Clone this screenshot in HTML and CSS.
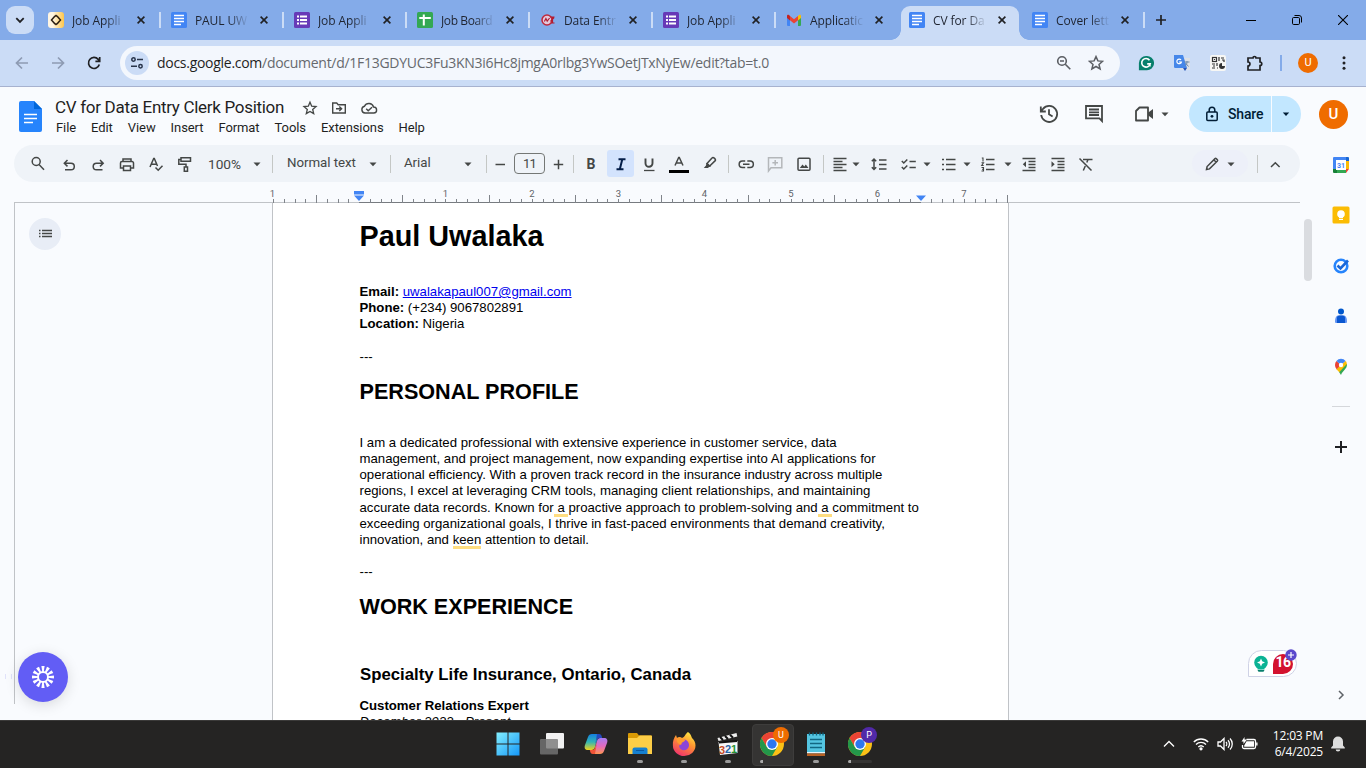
FILE: index.html
```html
<!DOCTYPE html>
<html lang="en">
<head>
<meta charset="utf-8">
<title>CV for Data Entry Clerk Position</title>
<link rel="stylesheet" href="styles.css">
</head>
<body>
<svg class="sprite" width="0" height="0">
  <symbol id="x" viewBox="0 0 10 10"><path d="M1.6 1.600l6.800 6.800M8.400 1.600L1.600 8.400" stroke="#202124" stroke-width="1.600"/></symbol>
  <symbol id="docs" viewBox="0 0 16 16"><rect width="16" height="16" rx="1.500" fill="#4285f4"/><path d="M3 3.500h10M3 6.500h10M3 9.500h10M3 12.500h7" stroke="#fff" stroke-width="1.500"/></symbol>
  <symbol id="forms" viewBox="0 0 16 16"><rect width="16" height="16" rx="1.500" fill="#673ab7"/><path d="M6 4.500h7M6 8h7M6 11.500h7M3 4.500h2M3 8h2M3 11.500h2" stroke="#fff" stroke-width="1.800"/></symbol>
  <symbol id="arr" viewBox="0 0 10 10"><path d="M1.500 3.500h7L5 7.200z" fill="#444746"/></symbol>
  <symbol id="chrome" viewBox="0 0 24 24"><circle cx="12" cy="12" r="12" fill="#fbc116"/><path d="M12 6h10.400A12 12 0 0 0 1.600 6l5.200 9z" fill="#ea4335"/><path d="M1.600 6A12 12 0 0 0 12 24l5.200-9H6.800z" fill="#23974a"/><circle cx="12" cy="12" r="6" fill="#fff"/><circle cx="12" cy="12" r="4.700" fill="#2d77ee"/></symbol>
</svg>

<header class="tabstrip">
  <div class="tabsearch"><svg width="10" height="10" viewBox="0 0 10 10"><path d="M1.300 3.200L5 6.900l3.700-3.700" fill="none" stroke="#202124" stroke-width="1.800"/></svg></div>
  <div class="tab"><svg class="fav" viewBox="0 0 16 16"><defs><linearGradient id="jg"><stop offset=".3" stop-color="#fff5e2"/><stop offset="1" stop-color="#ffc64a"/></linearGradient></defs><rect width="16" height="16" rx="3" fill="url(#jg)"/><path d="M7 4L3.500 8 7 12M9 4l3.500 4L9 12M6.500 4.800L8 3.500l1.500 1.300M6.500 11.200L8 12.500l1.500-1.300" fill="none" stroke="#2b1d10" stroke-width="1.500"/></svg><span class="tt">Job Appli</span><svg class="cl"><use href="#x"/></svg><i></i></div>
  <div class="tab"><svg class="fav"><use href="#docs"/></svg><span class="tt">PAUL UW</span><svg class="cl"><use href="#x"/></svg><i></i></div>
  <div class="tab"><svg class="fav"><use href="#forms"/></svg><span class="tt">Job Appli</span><svg class="cl"><use href="#x"/></svg><i></i></div>
  <div class="tab"><svg class="fav" viewBox="0 0 16 16"><rect width="16" height="16" rx="1.500" fill="#34a853"/><path d="M6.800 2.500v11M2.300 6h11.500" stroke="#fff" stroke-width="2"/></svg><span class="tt tight">Job Board</span><svg class="cl"><use href="#x"/></svg><i></i></div>
  <div class="tab"><svg class="fav" viewBox="0 0 16 16"><circle cx="7" cy="8" r="5" fill="#e4c9dc" stroke="#c0283c" stroke-width="1.500"/><path d="M4.400 9.500l1.500-3 1.300 2.600L9.600 6M10.500 9.500l3.500-4M10 5h4.500M11 11h3.500M12.500 5.500v5" fill="none" stroke="#b01c32" stroke-width="1.200"/></svg><span class="tt">Data Entr</span><svg class="cl"><use href="#x"/></svg><i></i></div>
  <div class="tab"><svg class="fav"><use href="#forms"/></svg><span class="tt">Job Appli</span><svg class="cl"><use href="#x"/></svg><i></i></div>
  <div class="tab"><svg class="fav" viewBox="0 0 16 16"><path d="M1 4.500h3V14H2a1 1 0 0 1-1-1z" fill="#4285f4"/><path d="M12 4.500h3V13a1 1 0 0 1-1 1h-2z" fill="#34a853"/><path d="M12 4l1-.9c1-.7 2 0 2 1V6l-3 2.500z" fill="#fbbc04"/><path d="M4 4L3 3.100C2 2.400 1 3.100 1 4v2l3 2.500z" fill="#c5221f"/><path d="M4 4l4 3.200L12 4v4.300l-4 3.200-4-3.200z" fill="#ea4335"/></svg><span class="tt">Applicatic</span><svg class="cl"><use href="#x"/></svg></div>
  <div class="tab active"><svg class="fav"><use href="#docs"/></svg><span class="tt">CV for Da</span><svg class="cl"><use href="#x"/></svg></div>
  <div class="tab"><svg class="fav"><use href="#docs"/></svg><span class="tt">Cover lett</span><svg class="cl"><use href="#x"/></svg><i></i></div>
  <svg class="newtab" width="12" height="12" viewBox="0 0 12 12"><path d="M6 1v10M1 6h10" stroke="#202124" stroke-width="1.700"/></svg>
  <div class="wincontrols">
    <svg width="10" height="10" viewBox="0 0 10 10"><path d="M0 5.500h10" stroke="#000"/></svg>
    <svg width="10" height="10" viewBox="0 0 10 10" fill="none" stroke="#000"><rect x=".500" y="2.500" width="7" height="7" rx="1.200"/><path d="M2.500.500H7A2.500 2.500 0 0 1 9.500 3v4.500"/></svg>
    <svg width="10" height="10" viewBox="0 0 10 10"><path d="M0 0l10 10M10 0L0 10" stroke="#000" stroke-width="1.100"/></svg>
  </div>
</header>

<nav class="browserbar">
  <div class="navbtns">
    <svg class="dim" width="14" height="14" viewBox="0 0 14 14"><path d="M13 7H2M7 1.500L1.500 7 7 12.500"/></svg>
    <svg class="dim" width="14" height="14" viewBox="0 0 14 14"><path d="M1 7h11M7 1.500L12.500 7 7 12.500"/></svg>
    <svg width="14" height="14" viewBox="0 0 14 14"><path d="M12.300 8.500A5.500 5.500 0 1 1 11.200 3.400L12.600 5M12.700 1v4.300H8.400"/></svg>
  </div>
  <div class="omnibox">
    <span class="siteinfo"><svg width="14" height="14" viewBox="0 0 14 14" fill="none" stroke="#28344a" stroke-width="1.500"><circle cx="3.500" cy="3.500" r="1.700"/><path d="M7 3.500h6M1 10.300h6"/><circle cx="10.500" cy="10.300" r="1.700"/></svg></span>
    <span class="url"><b>docs.google.com</b>/document/d/1F13GDYUC3Fu3KN3i6Hc8jmgA0rlbg3YwSOetJTxNyEw/edit?tab=t.0</span>
    <svg class="zoomout" width="16" height="16" viewBox="0 0 16 16" fill="none" stroke="#5b5e63" stroke-width="1.600"><circle cx="6" cy="6" r="4.300"/><path d="M9.300 9.300l5 5M4 6h4"/></svg>
    <svg width="16" height="16" viewBox="0 0 16 16"><path d="M8 1.600l1.900 4.300 4.700.4-3.600 3.100 1.100 4.600L8 11.500 3.900 14 5 9.400 1.400 6.300l4.700-.4z" fill="none" stroke="#5b5e63" stroke-width="1.500"/></svg>
  </div>
  <div class="exts">
    <svg width="16" height="16" viewBox="0 0 16 16"><path d="M8 1a7.200 7.200 0 1 1 0 14.300H.900V8A7.100 7.100 0 0 1 8 1z" fill="#087f6c"/><path d="M11.500 5.200A4.300 4.300 0 1 0 12.200 8.900H9.200M11.900 8.500v3" fill="none" stroke="#fff" stroke-width="1.600"/></svg>
    <svg width="16" height="16" viewBox="0 0 16 16"><rect x="6" y="3" width="10" height="12" fill="#dce0e7"/><path d="M0 0h9l4 13H1.200A1.200 1.200 0 0 1 0 12z" fill="#4687e9"/><path d="M9 13h4l-2 3z" fill="#2554b8"/><path d="M7 5a2.300 2.300 0 1 0 .4 2H5" fill="none" stroke="#fff" stroke-width="1.200"/><path d="M10.500 7h5M13 6v1c0 2-1 3-2 4M11.500 8l3 3.500" fill="none" stroke="#6f8aa8"/></svg>
    <svg width="16" height="16" viewBox="0 0 16 16"><rect width="16" height="16" rx="2" fill="#f7f7f4"/><g fill="none" stroke="#333" stroke-width="1.200"><rect x="2.500" y="2.500" width="4" height="4"/><path d="M9 2v4M11 3h3M12 5h2v2M2 9h3M7 8v3M3 11h2M2 13h3M7 13h1M4.500 4v1"/></g><path d="M9 11a3 3 0 0 1 3-3v3h3a3 3 0 0 1-6 0z" fill="#333"/></svg>
    <svg width="18" height="18" viewBox="0 0 18 18"><path d="M2 4h5a1.500 1.500 0 0 1 3 0h4v4a1.500 1.500 0 0 1 0 3.500v4.500H2v-4c2.600 0 2.600-4 0-4z" fill="none" stroke="#202124" stroke-width="1.700"/></svg>
  </div>
  <i class="extsep"></i>
  <span class="avatar small">U</span>
  <svg class="kebab" width="4" height="16" viewBox="0 0 4 16" fill="#202124"><circle cx="2" cy="2.700" r="1.500"/><circle cx="2" cy="8" r="1.500"/><circle cx="2" cy="13.300" r="1.500"/></svg>
</nav>

<main class="app">
  <section class="apphead">
    <svg class="logo" width="24" height="32" viewBox="0 0 24 32"><path d="M2 1h13L23 9V30a2 2 0 0 1-2 2H2a2 2 0 0 1-2-2V3a2 2 0 0 1 2-2z" fill="#2684fc"/><path d="M15 1l8 8h-8z" fill="#0066da"/><path d="M5 14.500h13M5 18.500h13M5 22.500h9" stroke="#fff" stroke-width="1.600"/></svg>
    <div class="titles">
      <div class="titlerow"><span class="doctitle">CV for Data Entry Clerk Position</span>
        <svg width="16" height="16" viewBox="0 0 16 16"><path d="M8 2.200l1.700 4 4.300.4-3.300 2.800 1 4.200L8 11.400l-3.700 2.200 1-4.200L2 6.600l4.300-.4z" fill="none" stroke="#444746" stroke-width="1.300"/></svg>
        <svg width="16" height="16" viewBox="0 0 16 16"><path d="M1.700 3h4l1.500 1.700h7.100V13H1.700zM5 8.800h5.500M8.300 6.500l2.300 2.300L8.300 11" fill="none" stroke="#444746" stroke-width="1.400"/></svg>
        <svg width="18" height="16" viewBox="0 0 18 16"><path d="M5 13a3.400 3.400 0 0 1-.5-6.700A4.800 4.800 0 0 1 13.500 7a3 3 0 0 1 .2 6zM6.200 8.800l2 2L12 7.200" fill="none" stroke="#444746" stroke-width="1.400"/></svg>
      </div>
      <div class="menus"><span>File</span><span>Edit</span><span>View</span><span>Insert</span><span>Format</span><span>Tools</span><span>Extensions</span><span>Help</span></div>
    </div>
    <div class="actions">
      <svg class="hist" width="20" height="20" viewBox="0 0 20 20" fill="none" stroke="#444746" stroke-width="1.800"><path d="M2.200 11A8 8 0 1 0 4 4.800L1.800 7.200M1.800 2.500v5h5M10 5.300v5l3.600 2.200"/></svg>
      <svg class="cmt" width="20" height="20" viewBox="0 0 20 20" fill="none" stroke="#444746" stroke-width="1.800"><path d="M2 2h16v15l-2.600-2.600H2zM5 5.500h10M5 8.300h10M5 11h10"/></svg>
      <svg class="meet" width="20" height="20" viewBox="0 0 20 20"><path d="M5.500 3.500h8.500v13H2V7z" fill="none" stroke="#444746" stroke-width="1.800" stroke-linejoin="round"/><path d="M14 8.800l5-3.800v10l-5-3.800z" fill="#444746"/></svg>
      <svg class="a10"><use href="#arr"/></svg>
      <div class="share"><svg width="14" height="16" viewBox="0 0 14 16"><rect x="1.800" y="6" width="10.400" height="8.500" rx="1" fill="none" stroke="#001d35" stroke-width="1.500"/><path d="M4.200 6V4a2.800 2.800 0 0 1 5.600 0v2" fill="none" stroke="#001d35" stroke-width="1.500"/><circle cx="7" cy="10.300" r="1.400" fill="#001d35"/></svg><span>Share</span></div>
      <div class="sharemore"><svg width="10" height="10" viewBox="0 0 10 10"><path d="M1.800 3.500h6.400L5 7z" fill="#001d35"/></svg></div>
      <span class="avatar">U</span>
    </div>
  </section>

  <div class="work">
    <div class="maincol">
      <div class="toolbar">
        <svg class="ic" viewBox="0 0 18 18"><circle cx="7.200" cy="6.500" r="4"/><path d="M10 9.500l5 5.200"/></svg>
        <svg class="ic" viewBox="0 0 18 18"><path d="M5 14.800h6a3.300 3.300 0 0 0 0-6.600H4.500M7.500 5L4.300 8.200l3.200 3.200"/></svg>
        <svg class="ic" viewBox="0 0 18 18"><path d="M13.500 14.800h-6a3.300 3.300 0 0 1 0-6.600H14M11 5l3.200 3.200L11 11.400"/></svg>
        <svg class="ic" viewBox="0 0 18 18"><path d="M5 6.500V4h8v2.500M5 13H2.500V8A1.500 1.500 0 0 1 4 6.500h10A1.500 1.500 0 0 1 15.500 8v5H13M5.500 11h7v4.500h-7z"/></svg>
        <svg class="ic" viewBox="0 0 18 18"><path d="M3 12L6.700 3.500h.6L10.500 11M4.300 9.200h5.300M8.500 12.500l2.700 2.700 4.300-4.400"/></svg>
        <svg class="ic" viewBox="0 0 18 18"><path d="M5 2.800h9.500v3.500H5zM5 4.500H2.800v4.700H10v2.600M8.300 12h3.200v4.300H8.300z"/></svg>
        <span class="tx pct">100%</span><svg class="a10"><use href="#arr"/></svg><i class="sep"></i>
        <span class="tx up">Normal text</span><svg class="a10"><use href="#arr"/></svg><i class="sep"></i>
        <span class="tx up">Arial</span><svg class="a10"><use href="#arr"/></svg><i class="sep"></i>
        <svg class="ic" viewBox="0 0 18 18"><path d="M4.500 9.500h9.500"/></svg>
        <span class="size">11</span>
        <svg class="ic" viewBox="0 0 18 18"><path d="M4.800 9.500h9.400M9.500 4.800v9.400"/></svg><i class="sep"></i>
        <span class="let bold">B</span><span class="let ital"><svg class="ic" viewBox="0 0 18 18"><path d="M6.500 4.300h7M4.500 14.200h7M10.300 4.300L7.800 14.200"/></svg></span>
        <svg class="ic" viewBox="0 0 18 18"><path d="M5.500 3.500V8.300a3.500 3.500 0 0 0 7 0V3.500" stroke-width="1.900"/><path d="M4 15.500h10.500" stroke-width="1.300"/></svg>
        <svg class="colr" width="20" height="18" viewBox="0 0 20 18"><path d="M6 10.500L9.700 2.500h.6L14 10.500M7.300 8h5.400" fill="none" stroke="#444746" stroke-width="1.500"/><path d="M0 15h20v3H0z"/></svg>
        <svg class="ic" viewBox="0 0 18 18"><path d="M6 8.500l5-5.600a1.300 1.300 0 0 1 2 0l1 1a1.300 1.300 0 0 1 0 2L8.700 11z"/><path d="M5.500 7.800L5 10.500 2.800 13H7l1-1 2-.5z" fill="#444746" stroke="none"/></svg><i class="sep"></i>
        <svg class="ic" viewBox="0 0 18 18"><path d="M8.200 6H5.400a3.200 3.200 0 0 0 0 6.500h2.800M10.300 6h2.800a3.200 3.200 0 0 1 0 6.500h-2.800M6 9.200h6.500"/></svg>
        <svg class="ic off" viewBox="0 0 18 18"><path d="M2.500 16V2.800h13.300v10H5zM9.200 5v5.600M6.400 7.800H12"/></svg>
        <svg class="ic" viewBox="0 0 18 18"><rect x="3" y="3.200" width="12" height="12" rx="1"/><path d="M4.800 13l2.700-3.500 1.800 2 1.500-2 2.700 3.500z" fill="#444746" stroke="none"/></svg><i class="sep"></i>
        <svg class="ic" viewBox="0 0 18 18"><path d="M2.500 3.500H15.500M2.500 6.500H11.500M2.500 9.500H15.500M2.500 12.500H11.500M2.500 15.500H15.500" stroke-width="1.300"/></svg><svg class="a10"><use href="#arr"/></svg>
        <svg class="ic" viewBox="0 0 18 18"><path d="M9 5h7.500M9 9.500h7.500M9 14h7.500M4 4.500v9.500M1.800 6.300L4 4.100l2.200 2.200M1.800 12.200L4 14.400l2.200-2.200"/></svg>
        <svg class="ic" viewBox="0 0 18 18"><path d="M1.800 6l2 2 3.500-3.500M1.800 12l2 2 3.500-3.500M9.500 6.500h6.300M9.500 12.500h6.300"/></svg><svg class="a10"><use href="#arr"/></svg>
        <svg class="ic" viewBox="0 0 18 18"><path d="M6 4.500h9.500M6 9.500h9.500M6 14.500h9.500M2 4.500h2M2 9.500h2M2 14.500h2"/></svg><svg class="a10"><use href="#arr"/></svg>
        <svg class="ic" viewBox="0 0 18 18"><path d="M7 4.500h8.500M7 9.500h8.500M7 14.500h8.500"/><path d="M2.800 3h1.200v3.500M2.500 7.800h2L2.700 10.500h2M2.500 12.500h2v3.500h-2M3 14.200h1.400" stroke-width="1.100"/></svg><svg class="a10"><use href="#arr"/></svg>
        <svg class="ic" viewBox="0 0 18 18"><path d="M2.500 3.500h13M8.500 6.500h7M8.500 9.500h7M8.500 12.500h7M2.500 15.500h13" stroke-width="1.300"/><path d="M6 6.300v6L2.800 9.300z" fill="#444746" stroke="none"/></svg>
        <svg class="ic" viewBox="0 0 18 18"><path d="M2.500 3.500h13M8.500 6.500h7M8.500 9.500h7M8.500 12.500h7M2.500 15.500h13" stroke-width="1.300"/><path d="M2.500 6.300v6l3.200-3z" fill="#444746" stroke="none"/></svg>
        <svg class="ic" viewBox="0 0 18 18"><path d="M6 4.500h9.500M10.800 5L9.800 7.500M8.300 11l-2 4.500M2.500 3.500L14.500 15.500"/></svg>
        <span class="mode"><svg class="ic" viewBox="0 0 18 18"><path d="M3.500 14.500l.6-3L12 3.600a.9.900 0 0 1 1.200 0L14.400 4.800a.9.900 0 0 1 0 1.200L6.500 13.900zM11 5l2 2"/></svg><svg class="a10"><use href="#arr"/></svg></span><i class="sep"></i>
        <svg class="ic" viewBox="0 0 18 18"><path d="M5 12L9.300 7.700l4.300 4.300"/></svg>
      </div>
      <svg class="ruler" width="1286" height="18" viewBox="14 185 1286 18" id="ruler">
        <path d="M14 202.500H1300" stroke="#c0c3c7"/><path d="M359 202.500H921" stroke="#777b80"/>
        <path class="ticks" d="M273.500 199v4M284.500 199v4M295.500 199v4M305.500 199v4M316.500 195v8M327.500 199v4M338.500 199v4M348.500 199v4M370.500 199v4M381.500 199v4M391.500 199v4M402.500 195v8M413.500 199v4M424.500 199v4M435.500 199v4M445.500 199v4M456.500 199v4M467.500 199v4M478.500 199v4M489.500 195v8M499.500 199v4M510.500 199v4M521.500 199v4M532.500 199v4M543.500 199v4M553.500 199v4M564.500 199v4M575.500 195v8M586.500 199v4M597.500 199v4M607.500 199v4M618.500 199v4M629.500 199v4M640.500 199v4M651.500 199v4M661.500 195v8M672.500 199v4M683.500 199v4M694.500 199v4M705.500 199v4M715.500 199v4M726.500 199v4M737.500 199v4M748.500 195v8M759.500 199v4M769.500 199v4M780.500 199v4M791.500 199v4M802.500 199v4M813.500 199v4M823.500 199v4M834.500 195v8M845.500 199v4M856.500 199v4M867.500 199v4M877.500 199v4M888.500 199v4M899.500 199v4M910.500 199v4M931.500 199v4M942.500 199v4M953.500 199v4M964.500 199v4M975.500 199v4M985.500 199v4M996.500 199v4M1007.500 195v8"/>
        <g class="nums"><text x="272.500" y="197">1</text><text x="445.500" y="197">1</text><text x="532" y="197">2</text><text x="618.500" y="197">3</text><text x="704.500" y="197">4</text><text x="791" y="197">5</text><text x="877.500" y="197">6</text><text x="964" y="197">7</text></g>
        <path d="M354 191h10v3.500h-10zM354 195.500h10l-5 5.500zM916 195.500h10l-5 5.500z" fill="#4285f4"/>
      </svg>
      <div class="canvas">
        <div class="gutter"><span class="outline"><svg width="14" height="14" viewBox="0 0 14 14"><path d="M4 3.500h10M4 6.500h10M4 9.500h10M1 3.500h1.500M1 6.500h1.500M1 9.500h1.500" stroke="#444746" stroke-width="1.300"/></svg></span></div>
        <article class="page">
          <h1>Paul Uwalaka</h1>
          <p class="contact"><b>Email:</b> <a>uwalakapaul007@gmail.com</a><br><b>Phone:</b> (+234) 9067802891<br><b>Location:</b> Nigeria<br><br>---</p>
          <h2>PERSONAL PROFILE</h2>
          <p class="profile">I am a dedicated professional with extensive experience in customer service, data<br>management, and project management, now expanding expertise into AI applications for<br>operational efficiency. With a proven track record in the insurance industry across multiple<br>regions, I excel at leveraging CRM tools, managing client relationships, and maintaining<br>accurate data records. Known for<mark> a </mark>proactive approach to problem-solving and<mark> a </mark>commitment to<br>exceeding organizational goals, I thrive in fast-paced environments that demand creativity,<br>innovation, and <mark>keen</mark> attention to detail.<br><br>---</p>
          <h2 class="work-h">WORK EXPERIENCE</h2>
          <h3>Specialty Life Insurance, Ontario, Canada</h3>
          <p class="job"><b>Customer Relations Expert</b><br><em>December 2022 - Present</em></p>
        </article>
      </div>
    </div>
    <div class="scroll"><i></i></div>
    <aside class="side">
      <svg width="18" height="18" viewBox="0 0 18 18"><path d="M1 2a1 1 0 0 1 1-1h12v4H5v8H1z" fill="#4285f4"/><path d="M14 1h2a1 1 0 0 1 1 1v3h-3z" fill="#1967d2"/><path d="M14 5h3v8h-3z" fill="#fbbc04"/><path d="M5 13h9v4H5z" fill="#34a853"/><path d="M1 13h4v4H2a1 1 0 0 1-1-1z" fill="#188038"/><path d="M14 13h3l-3 4z" fill="#ea4335"/><path d="M4 4h10v10H4z" fill="#fff"/><text x="9" y="12" class="cal">31</text></svg>
      <svg width="18" height="18" viewBox="0 0 18 18"><rect x=".500" y=".500" width="17" height="17" rx="1.500" fill="#fbbc04"/><circle cx="9" cy="8" r="3.800" fill="#fff"/><path d="M7 10h4v2H7zM7 12.800h4V14H7z" fill="#fff"/></svg>
      <svg width="18" height="18" viewBox="0 0 18 18"><circle cx="9" cy="9" r="6.300" fill="none" stroke="#2684fc" stroke-width="2.600"/><path d="M5.500 8.500l3 3L16 3.500" fill="none" stroke="#1a67d8" stroke-width="2.600"/></svg>
      <svg width="18" height="18" viewBox="0 0 18 18"><circle cx="9" cy="4.500" r="3" fill="#0057cc"/><path d="M3 15c0-4 1-6.500 3.500-6.500h5c2.500 0 3.500 2.500 3.500 6.500a1 1 0 0 1-1 1H4a1 1 0 0 1-1-1z" fill="#6294f2"/><path d="M5 16v-5A2.500 2.500 0 0 1 7.500 8.500h3a2.500 2.500 0 0 1 2.500 2.500v5z" fill="#0b57d0"/></svg>
      <svg width="18" height="18" viewBox="0 0 18 18"><path d="M3 7a6 6 0 0 1 1.500-4L9 7l-4 4.700C3.800 10.200 3 9 3 7z" fill="#ea4335"/><path d="M4.400 3A6 6 0 0 1 13.600 3L9 7z" fill="#4285f4"/><path d="M4.500 11.300L13.700 3c.8 1 1.300 2.500 1.300 4L7.500 14.500z" fill="#fbbc04"/><path d="M7.200 14.200L14.800 6c.8 5-4 6-5.800 11z" fill="#34a853"/><circle cx="9" cy="7" r="2.200" fill="#fff"/></svg>
      <i></i>
      <svg class="plus" width="12" height="12" viewBox="0 0 12 12"><path d="M6 0v12M0 6h12" stroke="#202124" stroke-width="2"/></svg>
      <svg class="hide" width="8" height="10" viewBox="0 0 8 10"><path d="M2 1l4 4-4 4" fill="none" stroke="#5f6368" stroke-width="1.500"/></svg>
    </aside>
  </div>

  <div class="grip"></div>
  <div class="fab"><svg width="24" height="24" viewBox="0 0 24 24" fill="none" stroke="#fff"><circle cx="12" cy="12" r="8" stroke-width="6" pathLength="12" stroke-dasharray=".58 .42" stroke-dashoffset=".29"/><circle cx="12" cy="12" r="5" stroke-width="2"/></svg></div>
  <div class="grammar"><svg width="16" height="18" viewBox="0 0 16 18"><circle cx="8" cy="7.500" r="6.800" fill="#0bb294"/><path d="M4.500 12h7v2.500h-7z" fill="#0bb294"/><path d="M8 3.500l1.200 2.800L12 7.500 9.200 8.700 8 11.500 6.800 8.700 4 7.500l2.800-1.200z" fill="#fff"/><path d="M4.500 15h7l-1 1.800h-5z" fill="#087f6c"/></svg><span>16</span><svg class="badge" width="12" height="12" viewBox="0 0 12 12"><circle cx="6" cy="6" r="5.700" fill="#5a48cc"/><path d="M6 3v6M3 6h6" stroke="#fff" stroke-width="1.200"/></svg></div>
</main>

<footer class="taskbar">
  <div class="apps">
    <div><svg width="24" height="24" viewBox="0 0 24 24"><defs><linearGradient id="wg" x2="1" y2="1"><stop stop-color="#83efff"/><stop offset="1" stop-color="#1597f8"/></linearGradient></defs><path d="M.500.500h11v11H.500zM12.500.500h11v11h-11zM.500 12.500h11v11H.500zM12.500 12.500h11v11h-11z" fill="url(#wg)"/></svg></div>
    <div><svg width="24" height="24" viewBox="0 0 24 24"><rect x="6" y="1" width="18" height="15.500" rx="1" fill="#f1f1f1"/><rect y="7" width="18" height="15.500" rx="1" fill="#777" fill-opacity=".8"/></svg></div>
    <div><svg width="24" height="24" viewBox="0 0 24 24"><defs><linearGradient id="c1" x2="0" y2="1"><stop stop-color="#147fe0"/><stop offset=".5" stop-color="#31b5b5"/><stop offset="1" stop-color="#f1d219"/></linearGradient><linearGradient id="c2" x2="0" y2="1"><stop stop-color="#a67cf1"/><stop offset=".5" stop-color="#e26ac0"/><stop offset="1" stop-color="#ff9551"/></linearGradient></defs><path d="M8 2h7l-4 13c-.6 2-1.500 3-3.500 3H4c-3 0-4-2-3-5l3-8c.6-2 2-3 4-3z" fill="url(#c1)"/><path d="M16 22H9l4-13c.6-2 1.500-3 3.500-3H20c3 0 4 2 3 5l-3 8c-.6 2-2 3-4 3z" fill="url(#c2)"/><path d="M13 2h2c2 0 2.500 1 3.200 4h-2.700c-2 0-2.500 1-3 2.500L11 14z" fill="#2449bf"/><path d="M11 22H9c-2 0-2.500-1-3.200-4H8c2 0 3-1 3.500-3L13 10z" fill="#f15437"/></svg></div>
    <div><svg width="24" height="24" viewBox="0 0 24 24"><path d="M0 2a1 1 0 0 1 1-1h8l2 2.500h12a1 1 0 0 1 1 1V22H0z" fill="#d99a05"/><path d="M0 6h9l2.500-2.500H23a1 1 0 0 1 1 1V22H0z" fill="#fdce47"/><path d="M4.500 22v-4.500a2 2 0 0 1 2-2h11a2 2 0 0 1 2 2V22z" fill="#1680cf"/><path d="M8 18.500h8" stroke="#0a58a0"/></svg><u></u></div>
    <div><svg width="24" height="24" viewBox="0 0 24 24"><defs><linearGradient id="ff" x1=".8" x2=".3" y2="1"><stop stop-color="#fff044"/><stop offset=".45" stop-color="#ff9330"/><stop offset="1" stop-color="#f0326e"/></linearGradient></defs><path d="M16 0c3 2 3 4 4 6 2 1.500 3.500 4.500 3.500 7.500a11.300 10.500 0 0 1-22.600 0C.500 9 2 6 4 3l1 3c2-1.500 4-1 5 0 3-1 3-4 6-6z" fill="url(#ff)"/><path d="M8 9c3-3 9-1 9 4a5 5 0 0 1-10 .500l3-1.500z" fill="#8b45d8"/><path d="M5 6c3-1 4 1 6 1s3 1 1 2.500-3 1-3 3c-3-.5-5-3-4-6.500z" fill="#ff9c2f"/></svg><u></u></div>
    <div><svg width="24" height="24" viewBox="0 0 24 24"><path d="M2.500 10l19-1v12L4 23z" fill="#f7f7f7"/><path d="M1.500 6L20.500 1l.8 3.500L2.500 9z" fill="#eee"/><path d="M4 5l3 3M9 4l3 3M14 2.700l3 3M3 10.500l18-1.500" stroke="#111" stroke-width="2"/><g class="mpc"><text x="3" y="21.500" fill="#c64b24">3</text><text x="9" y="21" fill="#2767a8">2</text><text x="15" y="20.500" fill="#299332">1</text></g></svg><u></u></div>
    <div class="on"><svg width="24" height="24"><use href="#chrome"/></svg><b class="who">U</b><u class="bar"></u></div>
    <div><svg width="24" height="24" viewBox="0 0 24 24"><path d="M3 2h18v18H3z" fill="#54c5e1"/><path d="M3 20h18v1.500H3z" fill="#e9f6fa"/><path d="M3 21.500h18V24H3z" fill="#b86225"/><path d="M6 7.500h12M6 11.500h12M6 15.500h12" stroke="#126782" stroke-width="1.500"/><path d="M5.500.500v3M9 .500v3M12.500.500v3M16 .500v3M19 .500v3" stroke="#0b6580" stroke-width="1.300"/></svg><u></u></div>
    <div><svg width="24" height="24"><use href="#chrome"/></svg><b class="who p">P</b><u class="bar"></u></div>
  </div>
  <div class="tray">
    <svg width="12" height="8" viewBox="0 0 12 8"><path d="M1 6.500l5-5 5 5"/></svg>
    <svg class="wifi" width="16" height="14" viewBox="0 0 16 14"><path d="M.800 5a10.200 10.200 0 0 1 14.400 0M3 7.500a7 7 0 0 1 10 0M5.300 10a3.900 3.900 0 0 1 5.400 0"/><circle cx="8" cy="11.800" r="1" fill="#fff"/></svg>
    <svg class="vol" width="16" height="14" viewBox="0 0 16 14"><path d="M1 5h2.500L7 1.500v11L3.500 9H1zM9 5c1 1 1 3 0 4M11 3.300c2 2 2 5.400 0 7.400M13 1.500c3 3 3 8 0 11"/></svg>
    <svg class="bat" width="17" height="14" viewBox="0 0 17 14"><path d="M5.500 2.500H13A1.500 1.500 0 0 1 14.500 4v6a1.500 1.500 0 0 1-1.500 1.500H3A1.500 1.500 0 0 1 1.500 10V8M15.900 5.500v3"/><path d="M5.500 4.300H13v5.500H3.200V8.500zM3.500 0v2.500H6L2.500 7V4.500H.500z" fill="#fff" stroke="none"/></svg>
    <div class="clock"><span>12:03 PM</span><span>6/4/2025</span></div>
    <svg class="bell" width="14" height="16" viewBox="0 0 14 16"><path d="M7 .500a5 5 0 0 1 5 5V9.500l1.800 2v1H.200v-1L2 9.500V5.500a5 5 0 0 1 5-5zM4.700 13.500h4.600a2.300 1.900 0 0 1-4.600 0z" fill="#ddd" stroke="none"/></svg>
  </div>
</footer>
</body>
</html>
```
FILE: styles.css
```css
* { box-sizing: border-box; }
body { margin: 0; width: 1366px; height: 768px; overflow: hidden; display: flex; flex-direction: column; background: #f9fbfe; font-family: Roboto, "Liberation Sans", sans-serif; }
svg { display: block; flex: none; }
.sprite { position: absolute; }
b { font-weight: 700; }

/* browser tabs */
.tabstrip { height: 40px; flex: none; display: flex; align-items: flex-start; background: #84abe9; font-family: "Open Sans", sans-serif; font-size: 12px; }
.tabsearch { width: 28px; height: 28px; margin: 6px 6px 0; border-radius: 9px; background: #cbdcf6; display: grid; place-items: center; }
.tab { position: relative; width: 123px; height: 40px; padding-left: 8px; display: flex; align-items: center; color: #1f2430; }
.fav { width: 16px; height: 16px; }
.tt { width: 54px; margin-left: 8px; white-space: nowrap; line-height: 18px; padding-top: 1px; letter-spacing: -.1px; -webkit-mask-image: linear-gradient(90deg, #000 62%, transparent 100%); mask-image: linear-gradient(90deg, #000 62%, transparent 100%); }
.tt.tight { letter-spacing: -.4px; }
.cl { width: 10px; height: 10px; margin-left: 10px; }
.tab > i { width: 2px; height: 16px; margin-left: 13px; background: #cbdcf6; }
.tab.active::before { content: ""; position: absolute; z-index: 0; left: 0; top: 6px; width: 118px; height: 34px; border-radius: 9px 9px 0 0; background: #cbdcf6; }
.tab.active::after { content: ""; position: absolute; left: -10px; bottom: 0; width: 138px; height: 10px; background: radial-gradient(circle at 0 0, transparent 9.500px, #cbdcf6 10px) left / 10px 10px no-repeat, radial-gradient(circle at 100% 0, transparent 9.500px, #cbdcf6 10px) right / 10px 10px no-repeat; }
.tab.active > * { position: relative; z-index: 1; }
.newtab { margin: 14px 0 0 8px; }
.wincontrols { margin: 15px 18px 0 auto; display: flex; gap: 36px; }

/* address bar */
.browserbar { height: 47px; flex: none; display: flex; align-items: center; padding-bottom: 1px; border-bottom: 1px solid #a7b2cf; background: #cbdcf6; }
.navbtns { width: 120px; padding-left: 15px; display: flex; gap: 22px; fill: none; stroke: #202124; stroke-width: 1.700; }
.navbtns .dim { stroke: #8e9bb3; }
.omnibox { width: 1000px; height: 34px; border-radius: 17px; background: #f3f7fd; display: flex; align-items: center; padding-left: 5px; }
.siteinfo { width: 24px; height: 24px; border-radius: 50%; background: #cbdcf6; display: grid; place-items: center; }
.url { width: 899px; margin-left: 8px; font: 14px/20px "Open Sans", sans-serif; color: #66696e; letter-spacing: -.28px; white-space: nowrap; }
.url b { font-weight: 400; color: #1f1f1f; }
.zoomout { margin-right: 16px; }
.exts { display: flex; align-items: center; gap: 20px; margin-left: 18px; }
.extsep { width: 2px; height: 16px; margin: 0 16px 0 16px; background: #84abe9; }
.avatar { width: 29px; height: 29px; border-radius: 50%; background: #ef6c00; color: #fff; font-size: 15px; font-weight: 500; display: grid; place-items: center; }
.avatar.small { width: 20px; height: 20px; font-size: 11px; font-weight: 400; }
.kebab { margin-left: 24px; }

/* document header */
.app { position: relative; height: 633px; flex: none; display: flex; flex-direction: column; }
.apphead { height: 58px; display: flex; padding: 13px 18px 0 19px; }
.titles { margin: -1px 0 0 12px; }
.titlerow { display: flex; align-items: center; height: 17px; gap: 13px; }
.doctitle { width: 234px; font-size: 17px; line-height: 17px; letter-spacing: -.3px; color: #1f1f1f; white-space: nowrap; }
.menus { display: flex; margin: 4px 0 0 1px; font-size: 13px; line-height: 16px; letter-spacing: -.08px; color: #1f1f1f; gap: 15px; }
.actions { margin-left: auto; height: 36px; margin-top: -4px; display: flex; align-items: center; }
.a10 { width: 10px; height: 10px; }
.cmt { margin-left: 25px; }
.meet { margin: 0 6px 0 30px; }
.share { width: 82px; height: 36px; margin-left: 19px; padding-left: 16px; border-radius: 18px 0 0 18px; background: #c2e7ff; display: flex; align-items: center; gap: 9px; font-size: 14px; letter-spacing: -.15px; font-weight: 500; color: #001d35; }
.sharemore { width: 29px; height: 36px; margin-left: 1px; border-radius: 0 18px 18px 0; background: #c2e7ff; display: flex; align-items: center; padding-left: 9px; }
.actions .avatar { margin-left: 18px; }
.work { display: flex; height: 575px; }
.maincol { width: 1286px; margin-left: 14px; }

/* toolbar */
.toolbar { height: 37px; border-radius: 18.500px; background: #eff3f8; padding-left: 15px; display: grid; align-items: center; justify-items: start; color: #444746;
  grid-template-columns: 31px 29px 29px 29px 29px 32px 44px 20px 15px 81px 22px 14px 59px 23px 5px 23px 35px 24px 9px 25px 33px 29px 32px 27px 9px 29px 29px 28px 8px 20px 19px 30px 22px 18px 22px 17px 24px 17px 29px 28px 115px 65px 9px 34px; }
.ic { width: 18px; height: 18px; fill: none; stroke: #444746; stroke-width: 1.500; }
.ic.off { stroke: #b4b7ba; }
.tx { font-size: 13.300px; white-space: nowrap; letter-spacing: -.05px; }
.tx.pct { font-size: 13.700px; }
.tx.up { margin-top: -2px; }
.sep { width: 1px; height: 18px; background: #c4c7c5; }
.size { width: 31px; height: 21px; border: 1px solid #747775; border-radius: 4px; font-size: 13px; line-height: 20px; letter-spacing: -.8px; text-align: center; }
.let { width: 18px; text-align: center; font-size: 14px; }
.let.bold { font-weight: 700; }
.let.ital { width: 27px; height: 27px; border-radius: 3px; background: #d3e3fd; display: grid; place-items: center; }
.ital .ic { stroke: #041e49; stroke-width: 2; }
.mode { width: 56px; height: 27px; border-radius: 14px; background: #edf0f9; display: flex; align-items: center; padding-left: 11px; gap: 5px; }
.ruler { margin-top: 3px; }
.ticks { stroke: #80848a; fill: none; }
.nums { font: 9.500px Roboto, sans-serif; fill: #5f6368; text-anchor: middle; }

/* page canvas */
.canvas { height: 517px; display: flex; overflow: hidden; }
.gutter { width: 258px; height: 501px; border-left: 1px solid #c0c3c7; padding: 15px 0 0 14px; }
.outline { width: 32px; height: 32px; border-radius: 50%; background: #e8edf6; display: grid; place-items: center; }
.page { width: 737px; height: 700px; flex: none; padding: 17px 0 0 86.500px; background: #fff; border: solid #c0c3c7; border-width: 0 1px; color: #000; font: 13.200px/16.200px "Liberation Sans", Arial, sans-serif; white-space: nowrap; }
.page h1, .page h2, .page h3, .page p { margin: 0; }
.page h1 { font-size: 28.800px; line-height: 32px; }
.page .contact { margin-top: 32px; }
.page h2 { font-size: 21.600px; line-height: 24px; margin-top: 15.400px; }
.page .profile { margin-top: 30.400px; }
.page .work-h { margin-top: 14.200px; }
.page h3 { font-size: 16.800px; line-height: 20px; margin: 46px 0 0 .500px; }
.page .job { margin-top: 12.700px; }
.page a { color: #0000ee; text-decoration: underline; }
mark { color: inherit; padding-bottom: 2px; background: linear-gradient(#ffdd80, #ffdd80) bottom / 100% 3px no-repeat; }
.scroll { width: 16px; padding: 74px 0 0 4px; }
.scroll i { display: block; width: 8px; height: 62px; border-radius: 4px; background: #dadce0; }

/* side panel */
.side { width: 50px; height: 575px; display: flex; flex-direction: column; align-items: center; padding-top: 11px; gap: 32.400px; }
.side > i { width: 18px; height: 1px; margin-top: -2px; background: #d5d7db; }
.side .plus { margin-top: 2px; }
.side .hide { margin: auto 0 20px; }
.cal { font: 700 7px Roboto, sans-serif; fill: #4285f4; text-anchor: middle; }

/* floating widgets */
.grip { position: absolute; left: 5px; top: 587px; width: 7px; height: 5px; border: solid #e0e2fa; border-width: 0 1px; }
.fab { position: absolute; left: 18px; top: 565px; width: 50px; height: 50px; border-radius: 50%; background: #625df5; display: grid; place-items: center; box-shadow: 0 3px 14px #0002; }
.grammar { position: absolute; left: 1248px; top: 563px; width: 49px; height: 27px; border: 1px solid #cfd2e6; border-radius: 14px 14px 14px 0; background: #fff; display: flex; align-items: center; padding-left: 4px; gap: 4px; }
.grammar span { width: 20px; height: 20px; border-radius: 10px 10px 10px 0; background: #d3122f; color: #fff; font: 700 14px/17px Roboto, sans-serif; letter-spacing: -.5px; text-align: center; }
.badge { position: absolute; left: 36px; top: -2px; }

/* taskbar */
.taskbar { height: 48px; flex: none; background: #252423; border-top: 1px solid #3b3a39; display: flex; color: #fff; }
.apps { margin-left: 486px; display: flex; }
.apps > div { position: relative; width: 44px; height: 46px; display: grid; place-items: center; }
.apps u { position: absolute; left: 19px; top: 39px; width: 6px; height: 3px; border-radius: 2px; background: #9a9a9a; }
.apps u.bar { left: 10px; width: 24px; background: linear-gradient(90deg, #aaa 3px, #353433 3px); }
.apps .on::before { content: ""; position: absolute; left: 2px; top: 3px; width: 40px; height: 40px; border: 1px solid #3e3d3c; border-radius: 4px; background: #353433; }
.on svg { position: relative; }
.who { position: absolute; left: 23px; top: 6px; width: 16px; height: 16px; border-radius: 50%; background: #ef6c00; font: 9px/16px Roboto, sans-serif; text-align: center; }
.who.p { background: #5129a8; }
.mpc { font: 700 11px "Liberation Sans", sans-serif; }
.tray { margin: 0 21px 1px auto; display: flex; align-items: center; fill: none; stroke: #fff; stroke-width: 1.300; }
.wifi { margin-left: 18px; }
.vol { margin-left: 8px; }
.bat { margin-left: 8px; }
.clock { width: 65px; display: flex; flex-direction: column; align-items: flex-end; font: 12px/16px "Open Sans", sans-serif; letter-spacing: -.2px; }
.bell { margin-left: 8px; }
```
